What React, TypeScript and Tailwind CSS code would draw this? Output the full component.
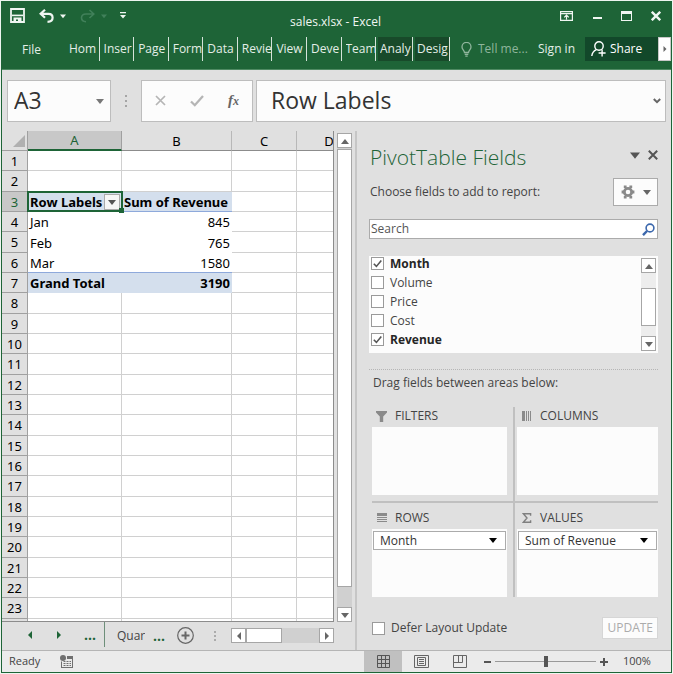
import { useState } from "react";
import type { ReactNode } from "react";

const tabs = ["Hom", "Inser", "Page", "Form", "Data", "Revie", "View", "Deve", "Team"];
const toolTabs = ["Analy", "Desig"];
const columns = ["A", "B", "C", "D"];
const rowNumbers = Array.from({ length: 23 }, (_, i) => i + 1);

const pivot: Record<number, [string, string]> = {
  3: ["Row Labels", "Sum of Revenue"],
  4: ["Jan", "845"],
  5: ["Feb", "765"],
  6: ["Mar", "1580"],
  7: ["Grand Total", "3190"],
};

function Triangle({ dir, className }: { dir: "up" | "down" | "left" | "right"; className: string }) {
  const points = {
    up: "0,7 4,2 8,7",
    down: "0,2 8,2 4,7",
    left: "6,0 6,8 2,4",
    right: "2,0 2,8 6,4",
  }[dir];
  return (
    <svg viewBox="0 0 8 8" className={className} fill="currentColor" aria-hidden="true">
      <polygon points={points} />
    </svg>
  );
}

function ScrollButton({ dir, label }: { dir: "up" | "down" | "left" | "right"; label: string }) {
  return (
    <button
      aria-label={label}
      className="flex size-[15px] shrink-0 items-center justify-center border border-[#a6a6a6] bg-white text-[#666]"
    >
      <Triangle dir={dir} className="size-[8px]" />
    </button>
  );
}

function CheckRow({ label, checked, id }: { label: string; checked: boolean; id: string }) {
  const [on, setOn] = useState(checked);
  return (
    <label htmlFor={id} className={`flex h-[19px] items-center gap-1.5 ${on ? "font-bold text-[#262626]" : "text-[#444]"}`}>
      <span className="relative flex size-[13px]">
        <input
          id={id}
          type="checkbox"
          checked={on}
          onChange={() => setOn(!on)}
          className="size-[13px] appearance-none border border-[#9a9a9a] bg-white"
        />
        {on && (
          <svg viewBox="0 0 13 13" className="pointer-events-none absolute inset-0 size-[13px]" fill="none" stroke="#555" strokeWidth="1.6">
            <path d="M2.8 6.8 5.4 9.4 10.3 3.4" />
          </svg>
        )}
      </span>
      {label}
    </label>
  );
}

function Area({ title, icon, children }: { title: string; icon: ReactNode; children?: ReactNode }) {
  return (
    <section>
      <h3 className="flex h-[20px] items-center gap-2 pb-0.5 pl-1 text-[12px] text-[#444]">
        <span className="flex w-[11px] justify-center">{icon}</span>
        {title}
      </h3>
      <div className="h-[68px] bg-[#fcfcfc] px-px py-0.5">{children}</div>
    </section>
  );
}

function FieldSelect({ label, area }: { label: string; area: string }) {
  return (
    <div className="relative">
      <select
        aria-label={area}
        className="block h-[19px] w-full appearance-none border border-[#ababab] bg-white pl-1.5 text-[12px] leading-4 text-[#333]"
      >
        <option>{label}</option>
      </select>
      <Triangle dir="down" className="pointer-events-none absolute top-[5px] right-[9px] size-[8px] text-black" />
    </div>
  );
}

function TitleBar() {
  return (
    <div className="flex h-[35px] items-start text-[#f0f6f2]">
      <div className="flex flex-1 items-center pt-1.5 pl-2">
        <button aria-label="Save">
          <svg viewBox="0 0 15 15" className="size-[15px]" fill="none" stroke="currentColor" strokeWidth="1.8">
            <path d="M1 1H14V14H1Z" />
            <path d="M2 7.4H13" strokeWidth="1.6" />
            <path d="M3.5 9.5H11.5V14H8V11.5H6V14H3.5Z" fill="currentColor" stroke="none" />
          </svg>
        </button>
        <button aria-label="Undo" className="ml-[14px] flex items-center gap-1.5">
          <svg viewBox="0 0 15 14" className="h-[14px] w-[15px]" fill="none" stroke="currentColor" strokeWidth="2.2">
            <path d="M6 .8 1.6 4.8 6 8.8M1.8 4.8H9.5C12.3 4.8 13.6 6.6 13.6 8.7 13.6 11 12 12.6 8.5 12.8" />
          </svg>
          <Triangle dir="down" className="size-[6px]" />
        </button>
        <button aria-label="Redo" className="ml-[14px] flex items-center gap-1.5 text-[#41805a]">
          <svg viewBox="0 0 15 14" className="h-[14px] w-[15px]" fill="none" stroke="currentColor" strokeWidth="1.6">
            <path d="M9.5 1 13.8 5 9.5 9M13.5 5H6C3 5 1.5 6.8 1.5 8.8 1.5 11 3 12.6 6 12.8" />
          </svg>
          <Triangle dir="down" className="size-[6px]" />
        </button>
        <button aria-label="Customize Quick Access Toolbar" className="ml-[13px]">
          <svg viewBox="0 0 6 7" className="h-[7px] w-[6px]" fill="currentColor">
            <path d="M0 0H6V1.3H0ZM0 3H6L3 6.6Z" />
          </svg>
        </button>
      </div>
      <h1 className="self-center pt-1 text-[12px] leading-4">sales.xlsx - Excel</h1>
      <div className="flex flex-1 items-center justify-end gap-[19px] pt-2 pr-[10px]">
        <button aria-label="Ribbon Display Options">
          <svg viewBox="0 0 13 10" className="h-[10px] w-[13px]" fill="none" stroke="currentColor" strokeWidth="1.2">
            <path d="M.6.6H12.4V9.4H.6ZM.6 2.6H12.4M6.5 8.6V4.4M4.2 6.4 6.5 4.2 8.8 6.4" />
          </svg>
        </button>
        <button aria-label="Minimize" className="flex h-[12px] w-[10px] items-center justify-center pt-1">
          <span className="h-0.5 w-[9px] bg-current" />
        </button>
        <button aria-label="Maximize" className="h-[10px] w-[11px] border border-t-[3px] border-current" />
        <button aria-label="Close">
          <svg viewBox="0 0 10 10" className="size-[10px]" stroke="currentColor" strokeWidth="2.4">
            <path d="M.8.8 9.2 9.2M9.2.8.8 9.2" />
          </svg>
        </button>
      </div>
    </div>
  );
}

function Ribbon() {
  return (
    <nav className="flex h-[24px] items-stretch text-[12px] leading-6 text-[#e4eee7]">
      <button className="w-[63px] pt-px pr-1">File</button>
      <div className="flex min-w-0 flex-1">
        {tabs.map((tab) => (
          <button key={tab} className="min-w-0 flex-1 border-r border-[#d5e3da] pl-1 text-left">
            <span className="block overflow-hidden whitespace-nowrap">{tab}</span>
          </button>
        ))}
      </div>
      {toolTabs.map((tab) => (
        <button key={tab} className="ml-0.5 w-[35px] border-r border-[#d5e3da] bg-[#184a2a] pl-0.5 text-left">
          <span className="block overflow-hidden whitespace-nowrap">{tab}</span>
        </button>
      ))}
      <button className="ml-[11px] flex w-[67px] items-center gap-1.5 text-[#8fb59c]">
        <svg viewBox="0 0 11 15" className="h-[15px] w-[11px] shrink-0" fill="none" stroke="currentColor" strokeWidth="1.3">
          <path d="M3.5 10.5C3.5 8.4 1 7.6 1 4.9A4.4 4.4 0 0 1 10 4.9C10 7.6 7.5 8.4 7.5 10.5ZM3.7 12.3H7.3M4.3 14.1H6.7" />
        </svg>
        <span className="whitespace-nowrap">Tell me...</span>
      </button>
      <button className="ml-2 w-[41px] whitespace-nowrap">Sign in</button>
      <button className="ml-2 flex w-[73px] items-center gap-1 bg-[#12482a] pl-1.5 text-white">
        <svg viewBox="0 0 15 16" className="h-[16px] w-[15px]" fill="none" stroke="currentColor" strokeWidth="1.4">
          <circle cx="8" cy="5" r="4.2" />
          <path d="M5.4 8.6C3 9.6 1.2 11.8.8 15M7.6 12H14.6M11.1 8.6V15.6" />
        </svg>
        Share
      </button>
      <button aria-label="More tabs" className="flex w-[13px] items-center justify-center border border-[#c8c8c8] bg-white text-[#666]">
        <Triangle dir="right" className="size-[6px]" />
      </button>
    </nav>
  );
}

function FormulaBar() {
  return (
    <div className="flex h-[62px] items-center border-t border-[#4f8a63] pr-[5px] pl-[5px] text-[#333]">
      <div className="flex h-[42px] w-[104px] items-center border border-[#bdbdbd] bg-[#fcfcfc] pr-1.5">
        <input aria-label="Name Box" defaultValue="A3" className="min-w-0 flex-1 bg-transparent pl-1.5 text-[23px] outline-none" />
        <button aria-label="Name list">
          <Triangle dir="down" className="size-[8px] text-[#777]" />
        </button>
      </div>
      <span className="mx-[14px] flex flex-col gap-[3px]">
        <i className="size-0.5 bg-[#a5a5a5]" />
        <i className="size-0.5 bg-[#a5a5a5]" />
        <i className="size-0.5 bg-[#a5a5a5]" />
      </span>
      <div className="flex h-[42px] w-[112px] items-center justify-between border border-[#bdbdbd] bg-[#fcfcfc] px-[13px]">
        <button aria-label="Cancel">
          <svg viewBox="0 0 11 11" className="size-[11px]" stroke="#b5b5b5" strokeWidth="1.7">
            <path d="M1 1 10 10M10 1 1 10" />
          </svg>
        </button>
        <button aria-label="Enter">
          <svg viewBox="0 0 14 12" className="h-[12px] w-[14px]" fill="none" stroke="#b5b5b5" strokeWidth="2.3">
            <path d="M1 6.5 4.8 10.2 13 1" />
          </svg>
        </button>
        <button aria-label="Insert Function" className="font-['Liberation_Serif',serif] text-[15px] leading-4 font-bold text-[#666] italic">
          f<span className="text-[12px]">x</span>
        </button>
      </div>
      <div className="ml-[3px] flex h-[42px] min-w-0 flex-1 items-center border border-[#bdbdbd] bg-[#fcfcfc] pr-1">
        <input
          aria-label="Formula Bar"
          defaultValue="Row Labels"
          className="min-w-0 flex-1 bg-transparent pl-[14px] text-[23px] outline-none"
        />
        <button aria-label="Expand Formula Bar">
          <svg viewBox="0 0 8 6" className="h-[6px] w-[8px]" fill="none" stroke="#666" strokeWidth="2">
            <path d="M.8 1 4 4.2 7.2 1" />
          </svg>
        </button>
      </div>
    </div>
  );
}

function cellStyle(row: number, col: number) {
  if (col > 1 || row < 3 || row > 7) return "border-r border-b border-[#d0d0d0]";
  if (row === 3) return "border-b border-[#8ea9db] bg-[#d4dfed] font-bold";
  if (row === 6) return "border-b border-[#8ea9db]";
  if (row === 7) return "bg-[#d4dfed] font-bold";
  return "";
}

function Sheet() {
  return (
    <div className="min-w-0 flex-1 overflow-hidden border-r border-b border-[#8c8c8c]">
      <table className="w-[360px] table-fixed border-separate border-spacing-0 font-['Noto_Sans','Open_Sans',sans-serif] text-[13px] leading-4 text-black">
        <colgroup>
          <col className="w-[26px]" />
          <col className="w-[94px]" />
          <col className="w-[110px]" />
          <col className="w-[65px]" />
          <col className="w-[65px]" />
        </colgroup>
        <thead>
          <tr className="h-[20px] bg-[#e0e0e0]">
            <th className="border-r border-b border-[#a0a0a0] p-0">
              <svg viewBox="0 0 12 12" className="mr-0.5 ml-auto size-[12px]" fill="#b0b0b0">
                <polygon points="12,0 12,12 0,12" />
              </svg>
            </th>
            {columns.map((c, i) => (
              <th
                key={c}
                scope="col"
                className={`border-r p-0 font-normal ${
                  i === 0 ? "border-r-[#a0a0a0] border-b-2 border-b-[#1e6437] bg-[#c8c8c8] text-[#1e6437]" : "border-b border-r-[#b8b8b8] border-b-[#8c8c8c]"
                }`}
              >
                {c}
              </th>
            ))}
          </tr>
        </thead>
        <tbody>
          {rowNumbers.map((n) => (
            <tr key={n} className={n % 3 === 2 ? "h-[21px]" : "h-[20px]"}>
              <th
                scope="row"
                className={`border-r border-b border-[#a0a0a0] p-0 text-center font-normal ${n === 3 ? "bg-[#c8c8c8] text-[#1e6437]" : "bg-[#e0e0e0]"}`}
              >
                {n}
              </th>
              {columns.map((c, i) => (
                <td
                  key={c}
                  className={`relative px-0.5 py-0 whitespace-nowrap ${i === 1 && n > 3 ? "text-right" : "text-left"} ${cellStyle(n, i)}`}
                >
                  {i < 2 && pivot[n]?.[i]}
                  {n === 3 && i === 0 && (
                    <>
                      <span className="pointer-events-none absolute -inset-px z-10 border-2 border-[#1e6437]" />
                      <span className="absolute -right-0.5 -bottom-0.5 z-20 size-[5px] bg-[#1e6437]" />
                      <button
                        aria-label="Filter row labels"
                        className="absolute top-0.5 right-0.5 flex h-[16px] w-[16px] items-center justify-center border border-[#ababab] bg-[#f6f6f6] text-[#555]"
                      >
                        <Triangle dir="down" className="size-[8px]" />
                      </button>
                    </>
                  )}
                </td>
              ))}
            </tr>
          ))}
          <tr className="h-0.5">
            <th className="border-r border-[#a0a0a0] bg-[#e0e0e0] p-0" />
            {columns.map((c) => (
              <td key={c} className="border-r border-[#d0d0d0] p-0" />
            ))}
          </tr>
        </tbody>
      </table>
    </div>
  );
}

function SheetTabs() {
  return (
    <div className="flex h-[28px] items-start text-[12px] text-[#444]">
      <div className="flex h-[25px] w-[103px] items-center justify-end gap-[21px] border-r border-[#6e8f7a] pr-2 text-[#1e6437]">
        <button aria-label="Previous sheet">
          <Triangle dir="left" className="size-[8px]" />
        </button>
        <button aria-label="Next sheet">
          <Triangle dir="right" className="size-[8px]" />
        </button>
        <button aria-label="First sheets" className="text-[14px] font-bold">...</button>
      </div>
      <div className="flex h-[27px] min-w-0 flex-1 items-center">
        <button className="ml-3 w-[28px] overflow-hidden text-left whitespace-nowrap">Quar</button>
        <button aria-label="More sheets" className="ml-2 text-[14px] font-bold text-[#1e6437]">...</button>
        <button aria-label="New sheet" className="ml-3">
          <svg viewBox="0 0 17 17" className="size-[17px]" fill="none" stroke="#666" strokeWidth="1.2">
            <circle cx="8.5" cy="8.5" r="7.8" />
            <path d="M8.5 4.5V12.5M4.5 8.5H12.5" strokeWidth="2" />
          </svg>
        </button>
      </div>
      <div className="flex h-[27px] items-center">
        <span className="mr-[15px] flex flex-col gap-0.5">
          <i className="size-0.5 bg-[#ababab]" />
          <i className="size-0.5 bg-[#ababab]" />
          <i className="size-0.5 bg-[#ababab]" />
        </span>
        <div className="flex w-[103px] bg-[#d0d0d0]">
          <ScrollButton dir="left" label="Scroll left" />
          <div className="h-[15px] w-[36px] border border-[#a6a6a6] bg-white" />
          <div className="flex-1" />
          <ScrollButton dir="right" label="Scroll right" />
        </div>
      </div>
    </div>
  );
}

function FieldsPane() {
  return (
    <aside className="flex w-[314px] shrink-0 flex-col pr-[13px] pl-3 text-[12px] text-[#444]">
      <div className="flex h-[47px] items-center">
        <h2 className="flex-1 pt-1.5 pl-px text-[21px] font-light text-[#1e6437]">PivotTable Fields</h2>
        <button aria-label="Pane options" className="mr-2">
          <Triangle dir="down" className="size-[10px] text-[#555]" />
        </button>
        <button aria-label="Close pane">
          <svg viewBox="0 0 10 10" className="size-[10px]" stroke="#555" strokeWidth="2">
            <path d="M.8.8 9.2 9.2M9.2.8.8 9.2" />
          </svg>
        </button>
      </div>
      <div className="flex h-[28px] items-center justify-between pl-px">
        <p>Choose fields to add to report:</p>
        <button aria-label="Tools" className="flex h-[28px] w-[45px] items-center justify-center gap-2 border border-[#ababab] bg-[#fcfcfc]">
          <svg viewBox="0 0 14 14" className="size-[14px]" fill="none" stroke="#8a8a8a">
            <circle cx="7" cy="7" r="3.7" strokeWidth="2.8" />
            <path d="M4.2 .6V3M9.8 .6V3M4.2 13.4V11M9.8 13.4V11M.6 7H3M13.4 7H11" strokeWidth="2.8" />
          </svg>
          <Triangle dir="down" className="size-[8px] text-[#666]" />
        </button>
      </div>
      <div className="mt-[13px] flex h-[20px] items-center border border-[#ababab] bg-white pr-0.5">
        <input
          aria-label="Search fields"
          placeholder="Search"
          className="min-w-0 flex-1 bg-transparent pl-px leading-4 outline-none placeholder:text-[#555]"
        />
        <svg viewBox="0 0 13 13" className="size-[13px]" fill="none" stroke="#3c68ad">
          <circle cx="8" cy="5" r="3.9" strokeWidth="1.6" />
          <path d="M5 8 1 12.2" strokeWidth="2.4" />
        </svg>
      </div>
      <div className="mt-[17px] flex h-[97px] justify-between bg-[#fcfcfc] pr-0.5 pl-0.5">
        <div className="-mt-0.5">
          <CheckRow id="f-month" label="Month" checked />
          <CheckRow id="f-volume" label="Volume" checked={false} />
          <CheckRow id="f-price" label="Price" checked={false} />
          <CheckRow id="f-cost" label="Cost" checked={false} />
          <CheckRow id="f-revenue" label="Revenue" checked />
        </div>
        <div className="my-0.5 flex w-[15px] flex-col bg-[#ededed]">
          <ScrollButton dir="up" label="Scroll fields up" />
          <div className="mt-[15px] h-[38px] border border-[#a6a6a6] bg-white" />
          <div className="flex-1" />
          <ScrollButton dir="down" label="Scroll fields down" />
        </div>
      </div>
      <div className="mt-4 border-t border-dotted border-[#b5b5b5]" />
      <p className="mt-1 pl-1 leading-[18px]">Drag fields between areas below:</p>
      <div className="mt-[15px] ml-[3px] grid grid-cols-[1fr_1fr]">
        <div className="border-r-2 border-b-2 border-[#c0c0c0] pr-1.5 pb-1.5">
          <Area
            title="FILTERS"
            icon={
              <svg viewBox="0 0 11 11" className="size-[11px]" fill="#8a8a8a">
                <path d="M0 0H11V1.5L7.2 5.5V11H3.8V5.5L0 1.5Z" />
              </svg>
            }
          />
        </div>
        <div className="border-b-2 border-[#c0c0c0] pb-1.5 pl-0.5">
          <Area
            title="COLUMNS"
            icon={
              <svg viewBox="0 0 10 10" className="size-[10px]" fill="#8a8a8a">
                <path d="M0 0H3V10H0ZM4 0H5V10H4ZM6 0H7V10H6ZM8 0H9V10H8Z" />
              </svg>
            }
          />
        </div>
        <div className="border-r-2 border-[#c0c0c0] pt-1.5 pr-1.5">
          <Area
            title="ROWS"
            icon={
              <svg viewBox="0 0 10 10" className="size-[10px]" fill="#8a8a8a">
                <path d="M0 0H10V3H0ZM0 4H10V5H0ZM0 6H10V7H0ZM0 8H10V9H0Z" />
              </svg>
            }
          >
            <FieldSelect label="Month" area="Rows field" />
          </Area>
        </div>
        <div className="pt-1.5 pl-0.5">
          <Area
            title="VALUES"
            icon={
              <svg viewBox="0 0 10 10" className="size-[10px]" fill="none" stroke="#808080" strokeWidth="1.4">
                <path d="M8.6 2.8V.8H1.4L5 5 1.4 9.2H8.6V7.2" />
              </svg>
            }
          >
            <FieldSelect label="Sum of Revenue" area="Values field" />
          </Area>
        </div>
      </div>
      <div className="mt-5 ml-[3px] flex items-center justify-between">
        <CheckRow id="defer" label="Defer Layout Update" checked={false} />
        <button disabled className="h-[22px] border border-[#d6d6d6] bg-[#fcfcfc] px-1 text-[#ababab]">
          UPDATE
        </button>
      </div>
    </aside>
  );
}

function StatusBar() {
  return (
    <footer className="flex h-[22px] items-center border-t border-[#b5b5b5] bg-[#ebebeb] text-[11px] text-[#444]">
      <span className="ml-[7px]">Ready</span>
      <button aria-label="Record macro" className="ml-5">
        <svg viewBox="0 0 13 13" className="size-[13px]" fill="#707070">
          <circle cx="3" cy="3" r="3" />
          <path d="M7 1H13V4H7ZM1 6.5H2V12H12V4H13V13H1Z" />
          <path d="M3.5 6H5.5V7H3.5ZM6.5 6H8.5V7H6.5ZM9.5 6H11V7H9.5ZM3.5 8H5.5V9H3.5ZM6.5 8H8.5V9H6.5ZM9.5 8H11V9H9.5ZM3.5 10H5.5V11H3.5ZM6.5 10H8.5V11H6.5ZM9.5 10H11V11H9.5Z" />
        </svg>
      </button>
      <div className="ml-auto flex items-center self-stretch">
        <button aria-label="Normal view" className="flex w-[38px] items-center justify-center self-stretch bg-[#c0c0c0]">
          <svg viewBox="0 0 13 13" className="size-[13px]" fill="none" stroke="#555">
            <path d="M.5.5H12.5V12.5H.5ZM.5 4.5H12.5M.5 8.5H12.5M4.5.5V12.5M8.5.5V12.5" />
          </svg>
        </button>
        <button aria-label="Page layout view" className="ml-3">
          <svg viewBox="0 0 15 13" className="h-[13px] w-[15px]" fill="none" stroke="#666">
            <path d="M.5.5H14.5V12.5H.5ZM3.5 2.5H11.5V10.5H3.5ZM5 4.5H10M5 6.5H10M5 8.5H10" />
          </svg>
        </button>
        <button aria-label="Page break preview" className="ml-6">
          <svg viewBox="0 0 14 13" className="h-[13px] w-[14px]" fill="none" stroke="#666">
            <path d="M.5.5H13.5V12.5H.5ZM5.5.5V7.5M9.5.5V7.5M.5 7.5H9.5" />
          </svg>
        </button>
        <button aria-label="Zoom out" className="ml-[17px] flex h-[10px] w-[7px] items-center">
          <span className="h-0.5 w-full bg-[#555]" />
        </button>
        <input
          type="range"
          aria-label="Zoom"
          defaultValue={50}
          className="mx-1 h-[12px] w-[101px] appearance-none bg-[linear-gradient(#999,#999)] bg-[length:100%_1px] bg-center bg-no-repeat [&::-webkit-slider-thumb]:h-[11px] [&::-webkit-slider-thumb]:w-[4px] [&::-webkit-slider-thumb]:appearance-none [&::-webkit-slider-thumb]:bg-[#555]"
        />
        <button aria-label="Zoom in">
          <svg viewBox="0 0 8 8" className="size-[8px]" stroke="#555" strokeWidth="2">
            <path d="M4 0V8M0 4H8" />
          </svg>
        </button>
        <span className="w-[63px] pl-[15px]">100%</span>
      </div>
    </footer>
  );
}

export default function App() {
  return (
    <div className="flex min-h-screen flex-col bg-[#eef5f0] p-px font-['Open_Sans','Noto_Sans',sans-serif]">
      <div className="flex flex-1 flex-col border border-[#1e6437] bg-[#e0e0e0]">
        <header className="h-[67px] bg-[#1e6437]">
          <TitleBar />
          <Ribbon />
        </header>
        <FormulaBar />
        <main className="flex flex-1">
          <div className="flex min-w-0 flex-1 gap-[3px] border-r-2 border-[#c6c6c6] pr-[3px]">
            <div className="flex min-w-0 flex-1 flex-col">
              <div className="flex flex-1 bg-white">
                <Sheet />
              </div>
              <SheetTabs />
            </div>
            <div className="mt-0.5 mb-7 flex w-[15px] flex-col bg-[#d0d0d0]">
              <ScrollButton dir="up" label="Scroll up" />
              <div className="mt-px flex-1 border border-[#a6a6a6] bg-white" />
              <div className="h-5" />
              <ScrollButton dir="down" label="Scroll down" />
            </div>
          </div>
          <FieldsPane />
        </main>
        <StatusBar />
      </div>
    </div>
  );
}
